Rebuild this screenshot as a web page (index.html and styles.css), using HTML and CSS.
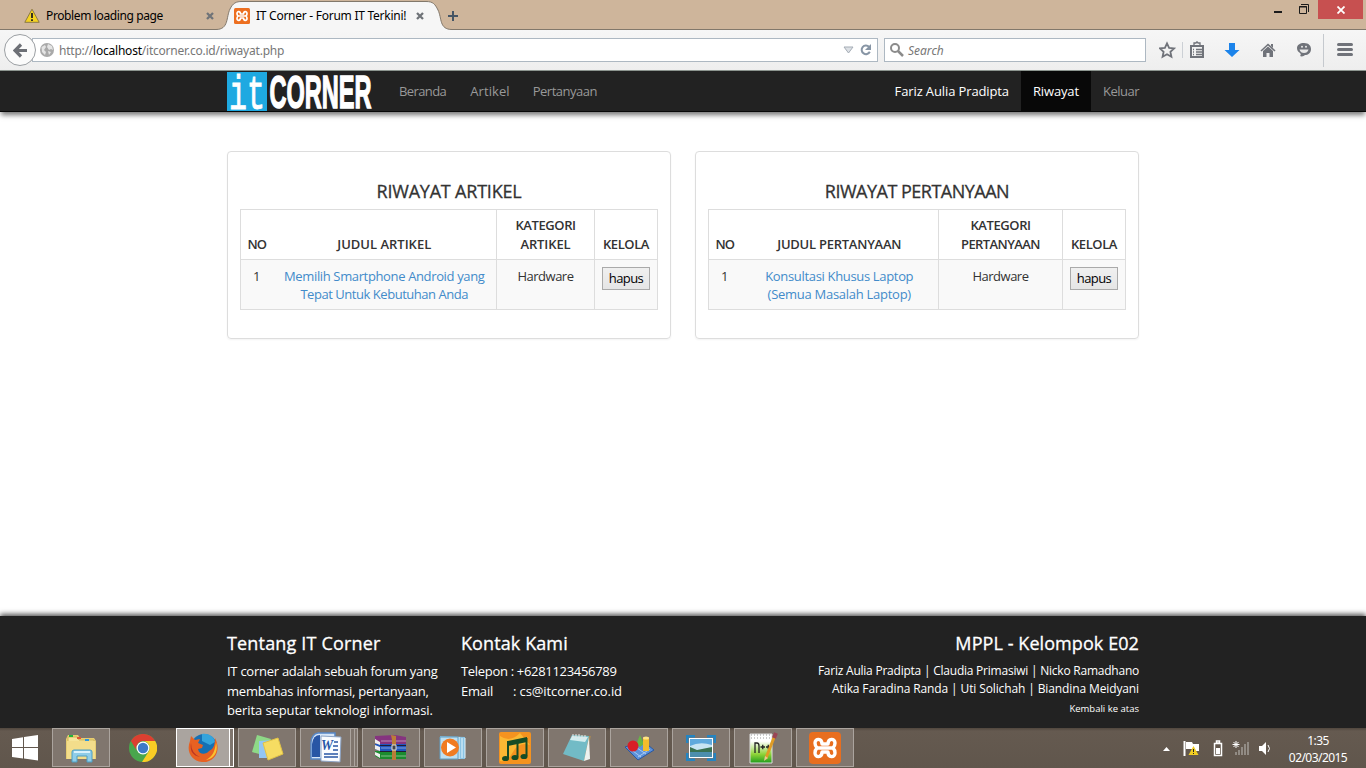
FILE: index.html
```html
<!DOCTYPE html>
<html lang="id">
<head>
<meta charset="utf-8">
<title>IT Corner - Forum IT Terkini!</title>
<link rel="stylesheet" href="styles.css">
</head>
<body>
<div class="screen">
  <header class="tabstrip">
    <div class="tab">
      <svg width="16" height="16" viewBox="0 0 16 16"><path d="M8 1.2 15.2 14.3H.8z" fill="#f5d321" stroke="#8b7a46" stroke-linejoin="round"/><path d="M8 5v5M8 11.3v1.7" stroke="#222" stroke-width="1.8"/></svg>
      <span class="t1">Problem loading page</span>
      <svg class="x" width="8" height="8" viewBox="0 0 8 8"><path d="m1 1 6 6m0-6-6 6" stroke="#6f7378" stroke-width="2.3"/></svg>
    </div>
    <div class="tab active">
      <svg class="tabshape" width="236" height="31" viewBox="0 0 236 31"><path d="M0 29.5C13 29.5 10 17 14 9 17 3 20 1.500 26 1.500H210C217 1.500 219 4 222 10 226 18 223 29.500 236 29.500V31H0z" fill="#f6f6f6"/><path d="M0 29.500C13 29.500 10 17 14 9 17 3 20 1.500 26 1.500H210C217 1.500 219 4 222 10 226 18 223 29.500 236 29.500" fill="none" stroke="#82786b"/></svg>
      <svg class="fav" width="16" height="16" viewBox="0 0 32 32"><rect width="32" height="32" rx="3" fill="#ed6f20"/><path d="M13 12C13 6 6 6 6 11Q6 14 8 16Q6 18 6 21C6 26 13 26 13 20M19 12C19 6 26 6 26 11Q26 14 24 16Q26 18 26 21C26 26 19 26 19 20M9 16H23M13 12H19M13 20H19" fill="none" stroke="#fff" stroke-width="3.400" stroke-linecap="round"/></svg>
      <span class="t2">IT Corner - Forum IT Terkini!</span>
      <svg class="x" width="8" height="8" viewBox="0 0 8 8"><path d="m1 1 6 6m0-6-6 6" stroke="#6f7378" stroke-width="2.3"/></svg>
    </div>
    <svg class="plus" width="10" height="10" viewBox="0 0 10 10"><path d="M0 5h10M5 0v10" stroke="#465565" stroke-width="2"/></svg>
    <div class="wincontrols">
      <svg width="8" height="29" viewBox="0 0 8 29"><path d="M0 12h8" stroke="#1b1b1b" stroke-width="2"/></svg>
      <svg width="10" height="29" viewBox="0 0 10 29"><path d="M.5 6.500h7v7h-7zM0 7h8M2 4.500h7.500V12" fill="none" stroke="#1b1b1b"/></svg>
      <div class="close"><svg width="8" height="8" viewBox="0 0 8 8"><path d="m.5.5 7 7m0-7-7 7" stroke="#fff" stroke-width="1.800"/></svg></div>
    </div>
  </header>
  <div class="toolbar">
    <div class="back"><svg width="14" height="15" viewBox="0 0 14 15"><path d="M8 1.500 2 7.500l6 6M2.500 7.500H14" fill="none" stroke="#6d7076" stroke-width="3.200"/></svg></div>
    <div class="url">
      <svg width="14" height="14" viewBox="0 0 14 14"><circle cx="7" cy="7" r="7" fill="#a9a9a9"/><path d="M1.500 4 5 2l1 2-2 3 2 2-1 3-3-3zM8 1l4 2 1 4-2-1-2 1-2-3zM8 8l3 1-2 3z" fill="#e4e4e4"/></svg>
      <span class="t3">http://<b>localhost</b>/itcorner.co.id/riwayat.php</span>
      <svg class="urlend" width="30" height="14" viewBox="0 0 30 14"><path d="M1 4h9L5.500 10z" fill="#dce0e5" stroke="#a5adb6"/><path d="M26 3.800a4.300 4.300 0 1 0 .8 5" fill="none" stroke="#8795a5" stroke-width="2"/><path d="M28 1v6h-6z" fill="#8795a5"/></svg>
    </div>
    <div class="search">
      <svg width="14" height="14" viewBox="0 0 14 14"><circle cx="5" cy="5" r="4" fill="none" stroke="#8b8b8b" stroke-width="2"/><path d="m8 8 5 5" stroke="#8b8b8b" stroke-width="2.500"/></svg>
      <span class="t4">Search</span>
    </div>
    <div class="tools">
      <svg width="207" height="40" viewBox="1159 30 207 40">
        <path d="m1167 43.300 2.100 4.500 5 .6-3.700 3.400 1 4.900-4.400-2.500-4.400 2.500 1-4.900-3.700-3.400 5-.6z" fill="none" stroke="#70737a" stroke-width="1.800"/>
        <path d="M1182.500 42v16" stroke="#ccd0d5"/>
        <path d="M1191 46h12v11h-12z" fill="none" stroke="#70737a" stroke-width="2"/><path d="M1194 45v-2h2q1-2 2 0h2v2M1193 49.500h1m2 0h6m-9 2.500h1m2 0h6m-9 2.500h1m2 0h6" fill="none" stroke="#70737a" stroke-width="1.300"/>
        <path d="M1229 43h6v7h4.500l-7.500 7-7.500-7h4.500z" fill="#1b83ea"/>
        <path d="m1261 51 7-6.500 7 6.500" fill="none" stroke="#70737a" stroke-width="1.600"/><path d="m1263 51 5-4.500 5 4.500v6h-3.500v-4h-3v4h-3.500zM1271 44h2v4l-2-2z" fill="#70737a"/>
        <path d="M1304 43c5 0 7 3 7 6 0 4-3 6-6 6-1 1-3 2-5 1 1-1 1-2 0-3-2-1-3-3-3-5 0-3 3-5 7-5z" fill="#70737a"/><path d="M1299.500 49.500h9q-1 3.500-4.500 3.500t-4.500-3.500z" fill="#e8e8e8"/><circle cx="1302" cy="46.700" r="1" fill="#e8e8e8"/><circle cx="1306" cy="46.700" r="1" fill="#e8e8e8"/>
        <path d="M1323.500 34v33" stroke="#c5c9ce"/>
        <path d="M1338.500 44.500h13m-13 5h13m-13 5h13" stroke="#70737a" stroke-width="3" stroke-linecap="round"/>
      </svg>
    </div>
  </div>
  <nav class="navbar">
    <svg class="logo" width="145" height="39" viewBox="0 0 145 39"><rect width="40" height="39" fill="#1ea9e1"/><text class="logo-it" x="2" y="36.500" textLength="36" lengthAdjust="spacingAndGlyphs">it</text><text class="logo-corner" x="42.500" y="35.500" textLength="102" lengthAdjust="spacingAndGlyphs">CORNER</text></svg>
    <a class="n1">Beranda</a><a class="n2">Artikel</a><a class="n3">Pertanyaan</a>
    <a class="n4">Fariz Aulia Pradipta</a><a class="n5">Riwayat</a><a class="n6">Keluar</a>
  </nav>
  <main class="content">
    <section class="panel">
      <h3><span class="h1a">RIWAYAT ARTIKEL</span></h3>
      <table>
        <colgroup><col class="c-no"><col class="c-judul"><col class="c-kat"><col class="c-kel"></colgroup>
        <tr><th><span class="th1">NO</span></th><th><span class="th2">JUDUL ARTIKEL</span></th><th><span class="th3">KATEGORI</span><br><span class="th4">ARTIKEL</span></th><th><span class="th5">KELOLA</span></th></tr>
        <tr><td>1</td><td><a class="a1">Memilih Smartphone Android yang</a><br><a class="a2">Tepat Untuk Kebutuhan Anda</a></td><td><span class="hw">Hardware</span></td><td><button><span class="bt">hapus</span></button></td></tr>
      </table>
    </section>
    <section class="panel right">
      <h3><span class="h1b">RIWAYAT PERTANYAAN</span></h3>
      <table>
        <colgroup><col class="c-no"><col class="c-judul"><col class="c-kat"><col class="c-kel"></colgroup>
        <tr><th><span class="th1">NO</span></th><th><span class="th6">JUDUL PERTANYAAN</span></th><th><span class="th3">KATEGORI</span><br><span class="th7">PERTANYAAN</span></th><th><span class="th5">KELOLA</span></th></tr>
        <tr><td>1</td><td><a class="a3">Konsultasi Khusus Laptop</a><br><a class="a4">(Semua Masalah Laptop)</a></td><td><span class="hw">Hardware</span></td><td><button><span class="bt">hapus</span></button></td></tr>
      </table>
    </section>
  </main>
  <footer class="footer">
    <div class="about"><h4><span class="f1">Tentang IT Corner</span></h4><p><span class="f2">IT corner adalah sebuah forum yang</span><br><span class="f3">membahas informasi, pertanyaan,</span><br><span class="f4">berita seputar teknologi informasi.</span></p></div>
    <div class="contact"><h4><span class="f5">Kontak Kami</span></h4><p><span class="f6">Telepon : +6281123456789</span><br><span class="f7">Email</span><span class="f8">: cs@itcorner.co.id</span></p></div>
    <div class="team"><h4><span class="f9">MPPL - Kelompok E02</span></h4><p><span class="f10">Fariz Aulia Pradipta | Claudia Primasiwi | Nicko Ramadhano</span><br><span class="f11">Atika Faradina Randa | Uti Solichah | Biandina Meidyani</span></p><small><span class="f12">Kembali ke atas</span></small></div>
  </footer>
  <div class="taskbar">
    <div class="start"><svg width="26" height="26" viewBox="0 0 26 26"><path d="M0 4 11 2.200V12H0zM12 2 26 0v12H12zM0 13h11v10.500L0 22zM12 13h14v12.500L12 23.500z" fill="#fff"/></svg></div>
    <div class="task"><svg width="34" height="32" viewBox="0 0 34 32"><path d="M2 7 4 3h10l2 3h14l2 3v18H2z" fill="#e6cd72"/><path d="M4 5h9l2 3h15v18H4z" fill="#f6e59a" stroke="#d2b659"/><path d="M5 3h4v2H5z" fill="#20b53b"/><path d="M13 5h4v2h-4z" fill="#df5734"/><path d="M21 7h4v2h-4z" fill="#2d97de"/><path d="M3 9h28v18H3z" fill="#f3dd8b"/><path d="M8 30V20q0-2 2-2h16q2 0 2 2v10h-5v-6H13v6z" fill="#8fcde8" stroke="#4d9ec3"/><path d="M10 20h16" stroke="#d9f2fc" stroke-width="2"/></svg></div>
    <div class="task plain"><svg width="28" height="28" viewBox="0 0 28 28"><circle cx="14" cy="14" r="14" fill="#49a64c"/><path d="M1.900 7A14 14 0 0 1 26.200 7H14a7 7 0 0 0-6 10z" fill="#dc3f31"/><path d="M26.200 7A14 14 0 0 1 13 28l7-11a7 7 0 0 0-6-10z" fill="#f9cc25"/><circle cx="14" cy="14" r="6.500" fill="#fff"/><circle cx="14" cy="14" r="5.200" fill="#3d7ac8"/></svg></div>
    <div class="task on"><svg width="30" height="30" viewBox="0 0 30 30"><circle cx="16" cy="14" r="13" fill="#1670b4"/><path d="M14 1c6-1 12 2 13 8l-5 3-8-4z" fill="#35a4dc"/><path d="M27 5c7 13-1 25-13 24C3 28-2 18 2 8l1-5 4 4 5-1-2 4 5 2-1 3-4 1c1 6 8 6 11 2 5-2 6-7 6-13z" fill="#e76122"/><path d="M28 9c3 11-3 17-10 18 7-4 9-9 10-18z" fill="#fac12f"/><path d="M3 10q0 10 9 14Q1 22 3 10" fill="#ba3524"/></svg></div><div class="stack s1"></div>
    <div class="task"><svg width="34" height="28" viewBox="0 0 34 28"><path d="m7 1 14 4-5 17-14-4z" fill="#8ed987"/><path d="m9 7 14-1 1 18H9z" fill="#93c6f2"/><path d="m13 9 15-5 5 16-15 6z" fill="#f6dc62" stroke="#e2c346"/></svg></div>
    <div class="task word"><svg width="32" height="32" viewBox="0 0 32 32"><path d="M8 1h17v26H1V10q1-8 7-9z" fill="#d7e6f8" stroke="#5788c8" stroke-width="1.500"/><path d="M2 12Q3 3 10 3v22H2z" fill="#2856a5"/><path d="m11 4 20 1-1 25-19-1z" fill="#fafcff" stroke="#8ca4c6"/><text class="word-w" x="11" y="18" textLength="12" lengthAdjust="spacingAndGlyphs">W</text><path d="M24 10h4m-5 4h5m-5 4h5m-14 4h14m-14 3h14" stroke="#2856a5" stroke-width="1.500"/></svg></div><div class="stack s2"></div><div class="stack s3"></div>
    <div class="task"><svg width="34" height="28" viewBox="0 0 34 28"><path d="m1 2 20-1 11 2v8H6L1 9z" fill="#85347f"/><path d="M1 10h31v7H6l-5-2z" fill="#2056be"/><path d="M1 17h31v8H6l-5-3z" fill="#1b8b2f"/><path d="m1 5 5 3v3L1 9zm0 6 5 2v4l-5-2zm0 7 5 2v4l-5-3z" fill="#eee"/><path d="M6 11.500h26M6 17.500h26" stroke="#221d33"/><path d="M7 7h25M7 14h25M7 22h25" stroke="#ffffff70"/><path d="m17 1 5 1v24h-4V6z" fill="#bb7d38"/><path d="M18 11h4v5h-4z" fill="#444" stroke="#ddd"/></svg></div>
    <div class="task"><svg width="30" height="26" viewBox="0 0 30 26"><path d="m2 1 25 1v22H2z" fill="#8cc4e4"/><path d="M21 2v22m3-21v20m3-20v20" stroke="#e5f7ff"/><path d="M2 2h18v22H2z" fill="#bedff1" stroke="#609fc5"/><circle cx="12" cy="12.500" r="9" fill="#f07b22"/><path d="M9 7v11l9-5.500z" fill="#fff"/></svg></div>
    <div class="task"><svg width="32" height="32" viewBox="0 0 32 32"><rect width="32" height="32" rx="2" fill="#f5931f"/><path d="M1 4q10 7 20-3L31 13Q20 9 14 20T1 29z" fill="#fbb833"/><path d="M9 9 28 5v5L9 14z" fill="#174c25"/><path d="M9 26V9M18.500 25V8M27.500 24V6" fill="none" stroke="#174c25" stroke-width="2"/><g fill="#174c25"><ellipse cx="6.500" cy="26.500" rx="3.500" ry="2.600"/><ellipse cx="16" cy="25.500" rx="3.500" ry="2.600"/><ellipse cx="25" cy="24.500" rx="3.500" ry="2.600"/></g></svg></div>
    <div class="task"><svg width="30" height="30" viewBox="0 0 30 30"><path d="m11 2 18 1-6 24-3 1z" fill="#a38858"/><path d="m10 2 17 1-5 25L1 21z" fill="#72bbc6"/><path d="m10 3 16 1-3 5-15-2z" fill="#d3edee"/><path d="m22 28 5-24 1 22z" fill="#edf2ef"/><path d="M11 1v4m3-4v4m3-4v4m3-3v4m3-4v4" stroke="#e6e6e6"/></svg></div>
    <div class="task"><svg width="30" height="28" viewBox="0 0 30 28"><path d="m1 13 18-6 11 9-16 10z" fill="#5c91da" stroke="#2858a2"/><path d="m5 14 12 9m-7-11 12 8m-8 3 12-8" stroke="#a8cbf3"/><path d="m12 11 4-10 4 9-4 3z" fill="#67b547"/><circle cx="9" cy="12" r="5.500" fill="#d81e26"/><path d="M19 4h6v13h-6z" fill="#f4bc2d"/><ellipse cx="22" cy="4" rx="3" ry="1.500" fill="#ffe382"/></svg></div>
    <div class="task"><svg width="30" height="26" viewBox="0 0 30 26"><path d="M1 8V1h8m12 0h8v7M1 18v7h8m12 0h8v-7" fill="none" stroke="#2484c1" stroke-width="3"/><path d="M3 3h24v20H3z" fill="#fff"/><path d="M4 4h22v18H4z" fill="#5fa9dd"/><path d="M4 11q10-5 22-1v6H4z" fill="#c7e4f3"/><path d="m4 12 7 3 15-3v5H4z" fill="#397152"/><path d="M4 17h22v5H4z" fill="#4c8ead"/></svg></div>
    <div class="task"><svg width="30" height="32" viewBox="0 0 30 32"><defs><linearGradient id="np" x2="0" y2="1"><stop offset=".25" stop-color="#fff"/><stop offset=".7" stop-color="#8ed338"/><stop offset="1" stop-color="#1d9b1c"/></linearGradient></defs><path d="M2 2h22v29H2z" fill="url(#np)" stroke="#ddd"/><path d="M3 3h20M3 6h20" stroke="#999" stroke-dasharray="1 2"/><path d="M7 21V11h2q2 0 2 3v7M12.500 15h4.500m-2.250-2.250v4.500M18 15h4.500m-2.250-2.250v4.500" fill="none" stroke="#222" stroke-width="1.300"/><path d="m27 3-9 23" stroke="#df9b25" stroke-width="3"/><path d="m28 1-2 5" stroke="#9a4555" stroke-width="4"/><path d="m17 24-1 5 4-3z" fill="#e8c98e"/></svg></div>
    <div class="task"><svg width="32" height="32" viewBox="0 0 32 32"><rect width="32" height="32" rx="4" fill="#e86e1f"/><path d="M13 12C13 6 6 6 6 11Q6 14 8 16Q6 18 6 21C6 26 13 26 13 20M19 12C19 6 26 6 26 11Q26 14 24 16Q26 18 26 21C26 26 19 26 19 20M9 16H23M13 12H19M13 20H19" fill="none" stroke="#fff" stroke-width="3.400" stroke-linecap="round"/></svg></div>
    <div class="tray"><svg width="110" height="20" viewBox="0 0 110 20"><path d="m1 13 3.500-4L8 13z" fill="#fff"/><path d="M22.500 3v15" stroke="#fff" stroke-width="2"/><path d="M24 4h6l1 2h6v7h-6l-1-2h-6z" fill="#fff"/><path d="m31.500 8 5 9h-10z" fill="#f2ce22"/><path d="M31.500 11v3m0 1v1" stroke="#222"/><path d="M52.500 5.500h7v12h-7zM54.500 3h3v2h-3z" fill="none" stroke="#fff" stroke-width="1.500"/><path d="M54 10h4v6h-4z" fill="#fff"/><path d="M74 17v-3m3 3v-5m3 5V9m3 8V6m3 11V4" stroke="#918b84" stroke-width="2"/><path d="M74 3v7m-3.500-3.500h7m-6-2.500 5 5m0-5-5 5" stroke="#fff"/><path d="M97 8h3l4-4v13l-4-4h-3z" fill="#fff"/><path d="M106 7q3 3.500 0 7" fill="none" stroke="#fff"/></svg></div>
    <div class="clock"><span class="k1">1:35</span><span class="k2">02/03/2015</span></div>
  </div>
</div>
</body>
</html>
```

FILE: styles.css
```css
* { box-sizing: border-box; }
body { margin: 0; background: #fff; font: 13px/18px "Open Sans", sans-serif; color: #333; }
svg { display: block; flex: none; }
span, a { white-space: nowrap; }
.screen { width: 1366px; height: 768px; display: flex; flex-direction: column; overflow: hidden; }

.tabstrip { height: 30px; flex: none; background: #ceb59b; border-bottom: 1px solid #82786b; display: flex; font: 12px/16px "Noto Sans", sans-serif; color: #000; }
.tab { display: flex; align-items: center; width: 216px; padding: 2px 2px 0 24px; }
.tab span { margin-left: 6px; }
.tab .x { margin-left: auto; }
.tab.active { position: relative; width: 230px; height: 30px; padding: 2px 22px 1px 18px; }
.tab.active > * { position: relative; }
.tab.active .tabshape { position: absolute; left: 0; top: 0; }
.plus { margin: 11px 0 0 2px; }
.wincontrols { margin-left: auto; display: flex; gap: 17px; width: 92px; }
.close { width: 45px; height: 19px; margin-left: -8px; background: #c75050; display: flex; align-items: center; justify-content: center; flex: none; }
.t1 { letter-spacing: -.38px; }
.t2 { letter-spacing: -.26px; }
.t3 { letter-spacing: -.22px; }

.toolbar { height: 41px; flex: none; background: linear-gradient(#f6f6f6, #eee); border-bottom: 1px solid #8d9690; display: flex; align-items: center; padding-left: 4px; }
.back { width: 32px; height: 32px; flex: none; border: 1px solid #9b9fa3; border-radius: 50%; background: #fbfbfb; display: flex; align-items: center; justify-content: center; z-index: 1; }
.url, .search { height: 24px; background: #fff; border: 1px solid #adb8c2; display: flex; align-items: center; font: 12px/16px "Noto Sans", sans-serif; color: #777; }
.url span, .search span { padding-top: 2px; }
.url { width: 846px; margin-left: -4px; padding: 0 4px 0 7px; }
.url span { margin-left: 5px; }
.url b { font-weight: 400; color: #000; }
.urlend { margin-left: auto; }
.search { width: 262px; margin-left: 6px; padding-left: 5px; }
.search span { font-style: italic; margin-left: 4px; }
.tools { margin-left: 13px; }

.navbar { height: 41px; flex: none; background: #222; border-bottom: 1px solid #080808; display: flex; padding-left: 227px; color: #999; line-height: 41px; box-shadow: 0 4px 5px -1px #777; z-index: 1; }
.logo { margin: 1px 15px 0 0; overflow: visible; }
.logo-it { font: 49px "Liberation Mono", monospace; fill: #fff; stroke: #fff; stroke-width: .8px; }
.logo-corner { font: bold 46px "Liberation Sans", sans-serif; fill: #fff; stroke: #fff; stroke-width: 1.500px; }
.navbar a { margin: 0 12px; }
.navbar .n1 { letter-spacing: -.6px; }
.navbar .n2 { letter-spacing: .1px; margin-right: 11px; }
.navbar .n3 { letter-spacing: -.5px; }
.navbar .n4 { margin-left: auto; color: #fff; letter-spacing: -.12px; }
.navbar .n5 { margin: 0; padding: 0 12px; background: #080808; color: #fff; letter-spacing: -.14px; }
.navbar .n6 { margin-right: 227px; letter-spacing: -.5px; }

.content { flex: 1; display: flex; align-items: flex-start; gap: 24px; padding: 39px 227px 0; }
.panel { width: 444px; height: 188px; border: 1px solid #ddd; border-radius: 4px; box-shadow: 0 1px 2px #0000000d; padding: 28px 12px 0; }
h3 { margin: 0; height: 29px; font: 500 18px/22px "Open Sans", sans-serif; text-align: center; -webkit-text-stroke: .3px; }
.h1a { letter-spacing: -.2px; }
.h1b { letter-spacing: -.5px; }
table { width: 418px; table-layout: fixed; border-collapse: collapse; text-align: center; border: 1px solid #ddd; }
.c-no { width: 32px; } .c-kat { width: 98px; } .c-kel { width: 63px; }
.right .c-kat { width: 124px; }
tr { height: 50px; }
th, td { padding: 6px 0 4px; border: 1px solid #ddd; }
th:first-child, td:first-child { border-right: 0; }
th:nth-child(2), td:nth-child(2) { border-left: 0; }
th { vertical-align: bottom; font-weight: 600; line-height: 19px; padding-bottom: 5px; }
td { vertical-align: top; padding-top: 7px; background: #f9f9f9; }
td a { color: #428bca; }
.th1 { letter-spacing: -.9px; }
.th3, .th5 { letter-spacing: -.4px; }
.th4 { letter-spacing: -.1px; }
.th6 { letter-spacing: -.25px; }
.th7 { letter-spacing: -.58px; }
.a1 { letter-spacing: -.36px; }
.a2 { letter-spacing: -.46px; }
.a3 { letter-spacing: -.33px; }
.a4 { letter-spacing: -.27px; }
.hw { letter-spacing: -.5px; }
.bt { letter-spacing: -.6px; }
button { width: 48px; height: 23px; padding: 0; border: 1px solid #aaa; background: linear-gradient(#f0f0f0, #e5e5e5); font: 13px/21px "Open Sans", sans-serif; color: #000; display: block; margin: 0 auto; }

.footer { height: 112px; flex: none; display: flex; padding: 16px 227px 0; background: #222; color: #fff; box-shadow: 0 -2px 5px #555; }
.footer h4 { margin: 0 0 7px; font: 500 18px/23px "Open Sans", sans-serif; -webkit-text-stroke: .3px; }
.footer p { margin: 0; line-height: 19.500px; }
.about { width: 234px; }
.f1 { letter-spacing: .17px; }
.f2 { letter-spacing: -.26px; }
.f3 { letter-spacing: -.21px; }
.f4 { letter-spacing: -.1px; }
.f5 { letter-spacing: .1px; }
.f6 { letter-spacing: -.31px; }
.f7 { display: inline-block; width: 52px; letter-spacing: -.2px; }
.f8 { letter-spacing: -.1px; }
.f9 { letter-spacing: .08px; }
.f10 { letter-spacing: -.23px; }
.f11 { letter-spacing: -.12px; }
.team { margin-left: auto; text-align: right; }
.team p { font-size: 12px; line-height: 18px; }
.team small { display: block; font-size: 9.500px; line-height: 16px; margin-top: 3px; }

.taskbar { height: 40px; flex: none; display: flex; background: linear-gradient(#51473e, #655a50 3px, #60564c); z-index: 1; }
.start { width: 52px; padding: 7px 0 0 12px; }
.task { width: 58px; height: 39px; flex: none; margin-right: 4px; border: 1px solid #aba49e; background: #80766e; display: flex; align-items: center; justify-content: center; }
.task.plain { background: none; border-color: transparent; }
.task.on { width: 54px; margin-right: 0; background: #aaa49f; border-color: #fff; }
.task.word { width: 51px; margin-right: 0; }
.stack { height: 39px; border: 1px solid #aba49e; border-left: 0; flex: none; background: #80766e; }
.s1 { width: 4px; margin-right: 4px; border-color: #fff; }
.s2 { width: 4px; } .s3 { width: 3px; margin-right: 4px; }
.word-w { font: italic bold 14px "Liberation Serif", serif; fill: #2856a5; }
.tray { margin: 10px 0 0 auto; }
.clock { width: 94px; display: flex; flex-direction: column; align-items: center; padding: 4px 2px 0 0; color: #fff; font: 12px/17px "Noto Sans", sans-serif; }
.k1, .k2 { letter-spacing: -.55px; }
```
